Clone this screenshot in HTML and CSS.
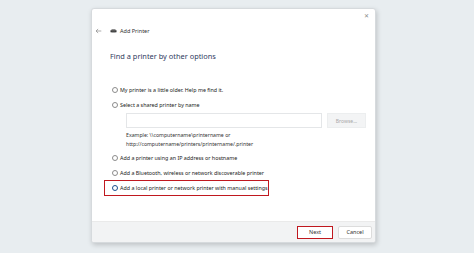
FILE: index.html
```html
<!DOCTYPE html>
<html lang="en">
<head>
  <meta charset="UTF-8">
  <title>Add Printer</title>
  <link rel="stylesheet" href="styles.css">
</head>
<body>
  <div class="dialog">
    <div class="titlebar">
      <span class="close">&#x2715;</span>
    </div>
    <div class="nav">
      <svg class="back" viewBox="0 0 10 8"><path d="M9 4H1.5M4.5 1L1.5 4l3 3" fill="none" stroke="#7a7a7a" stroke-width="0.9"/></svg>
      <svg class="printer" viewBox="0 0 10 6"><path d="M2 0.5h6v1.5H2z" fill="#6a6a6a"/><path d="M0.5 2h9v3h-9z" fill="#2f2f2f"/><path d="M2 4h6v1.5H2z" fill="#9a9a9a"/></svg>
      <span class="nav-title">Add Printer</span>
    </div>
    <div class="content">
      <h1 class="heading">Find a printer by other options</h1>
      <div class="options">
        <label class="option"><span class="radio"></span>My printer is a little older. Help me find it.</label>
        <label class="option"><span class="radio"></span>Select a shared printer by name</label>
        <div class="shared">
          <div class="shared-row">
            <div class="field"></div>
            <div class="browse">Browse...</div>
          </div>
          <p class="example">Example: \\computername\printername or<br>http://computername/printers/printername/.printer</p>
        </div>
        <label class="option"><span class="radio"></span>Add a printer using an IP address or hostname</label>
        <label class="option"><span class="radio"></span>Add a Bluetooth, wireless or network discoverable printer</label>
        <label class="option selected"><span class="radio checked"></span>Add a local printer or network printer with manual settings</label>
      </div>
    </div>
    <div class="footer">
      <button class="btn btn-next">Next</button>
      <button class="btn">Cancel</button>
    </div>
  </div>
</body>
</html>
```

FILE: styles.css
```css
* {
  box-sizing: border-box;
  margin: 0;
  padding: 0;
}

body {
  font-family: 'Noto Sans', 'Liberation Sans', sans-serif;
  background: #e8edf0;
  height: 253px;
  padding: 8px 0 0 91px;
  overflow: hidden;
}

.dialog {
  width: 285px;
  height: 235px;
  background: #fff;
  border: 1px solid #d6dadd;
  border-radius: 3px;
  box-shadow: 1px 2px 5px rgba(0, 0, 0, 0.18);
  display: flex;
  flex-direction: column;
  overflow: hidden;
}

.titlebar {
  height: 14px;
  display: flex;
  justify-content: flex-end;
  align-items: center;
  padding-right: 4px;
}

.close {
  font-size: 6px;
  color: #8a8a8a;
  width: 10px;
  text-align: center;
}

.nav {
  height: 16px;
  display: flex;
  align-items: center;
  padding-left: 3px;
}

.back {
  width: 7px;
  height: 6px;
}

.printer {
  width: 7px;
  height: 4px;
  margin-left: 8px;
}

.nav-title {
  font-size: 5.5px;
  color: #333;
  margin-left: 3px;
}

.content {
  flex: 1;
  padding: 12px 0 0 18px;
}

.heading {
  font-size: 7.4px;
  font-weight: normal;
  color: #2f3b5e;
  line-height: 11px;
}

.options {
  margin-top: 20px;
  display: flex;
  flex-direction: column;
}

.option {
  display: flex;
  align-items: center;
  height: 15px;
  font-size: 5.35px;
  color: #1a1a1a;
  padding-left: 2px;
  white-space: nowrap;
}

.radio {
  width: 6px;
  height: 6px;
  border: 0.8px solid #8c8c8c;
  border-radius: 50%;
  margin-right: 2px;
  flex-shrink: 0;
}

.radio.checked {
  border: 1.8px solid #1a4f8f;
  background: #fff;
}

.shared {
  padding-left: 16px;
  margin-bottom: 1px;
}

.shared-row {
  display: flex;
  gap: 5px;
  margin-top: 1px;
}

.field {
  width: 196px;
  height: 15px;
  border: 1px solid #e4e6e8;
}

.browse {
  width: 39px;
  height: 15px;
  background: #f3f4f5;
  border: 1px solid #eceeef;
  color: #a8a8a8;
  font-size: 5px;
  display: flex;
  align-items: center;
  justify-content: center;
}

.example {
  font-size: 5.2px;
  line-height: 9px;
  color: #333;
  margin-top: 3px;
}

.selected {
  width: 165px;
  margin-left: -6px;
  padding-left: 7px;
  height: 16px;
  border: 1.5px solid #c0181f;
}

.footer {
  height: 21px;
  background: #f2f3f4;
  border-top: 1px solid #eaeaea;
  display: flex;
  justify-content: flex-end;
  align-items: center;
  gap: 5px;
  padding-right: 3px;
}

.btn {
  font-family: inherit;
  font-size: 5.5px;
  color: #333;
  background: #fff;
  border: 1px solid #dcdcdc;
  border-radius: 2px;
  width: 34px;
  height: 13px;
}

.btn-next {
  border: 1.5px solid #c0181f;
  border-radius: 0;
  width: 36px;
}
```
